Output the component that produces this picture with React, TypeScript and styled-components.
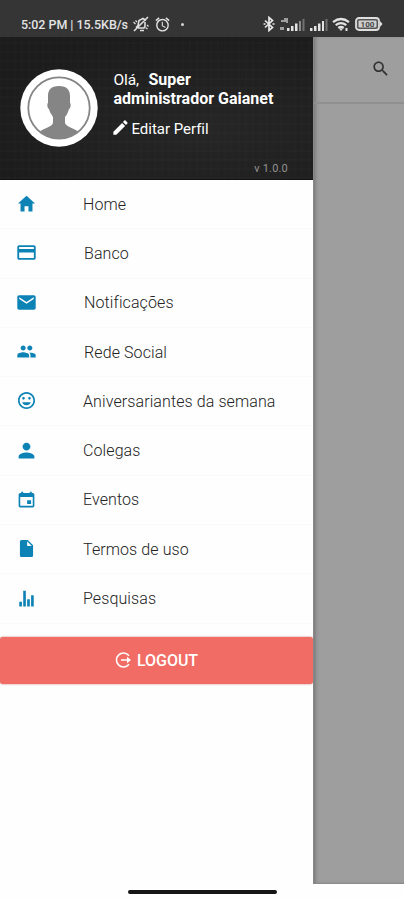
import React from "react";
import styled, { createGlobalStyle } from "styled-components";
import {
  IoMdHome, IoMdCard, IoMdMail, IoMdPeople, IoMdHappy, IoMdPerson,
  IoMdCalendar, IoMdDocument, IoMdStats, IoMdCreate, IoMdSearch,
} from "react-icons/io";
import { MdAlarm } from "react-icons/md";

const GlobalStyle = createGlobalStyle`
  * { box-sizing: border-box; }
  body { margin: 0; background: #fff; font-family: Roboto, "Liberation Sans", sans-serif; }
`;

const Screen = styled.div`
  width: 404px;
  height: 900px;
  display: flex;
  flex-direction: column;
  background: #fefefe;
  overflow: hidden;
`;

const StatusBar = styled.header`
  height: 37px;
  flex: none;
  display: flex;
  justify-content: space-between;
  padding: 11px 21px 0;
  background: #353535;
  color: #e4e4e4;
`;

const StatusGroup = styled.div<{ $gap: number }>`
  height: 26px;
  display: flex;
  align-items: center;
  gap: ${(p) => p.$gap}px;
  svg { display: block; flex: none; }
`;

const Clock = styled.span`
  width: 107px;
  font-size: 12.5px;
  font-weight: 500;
  letter-spacing: -0.05px;
  white-space: nowrap;
`;

const Dot = styled.i`
  width: 3px;
  height: 3px;
  margin-left: 6px;
  border-radius: 50%;
  background: #d5d5d5;
`;

const Body = styled.div`
  height: 847px;
  flex: none;
  display: flex;
`;

const Drawer = styled.aside`
  width: 313px;
  flex: none;
  background: #fefefe;
`;

const Profile = styled.section`
  position: relative;
  height: 143px;
  display: flex;
  padding: 32px 0 0 20px;
  color: #fff;
  background-color: #1d1d1d;
  background-image:
    repeating-linear-gradient(90deg, rgba(255, 255, 255, 0.008) 0 2px, transparent 2px 7px),
    repeating-linear-gradient(0deg, rgba(255, 255, 255, 0.01) 0 2px, transparent 2px 9px),
    radial-gradient(ellipse at 65% 65%, #262626, #1c1c1c 75%);
  border-bottom: 1px solid #111;
`;

const Avatar = styled.svg`
  width: 78px;
  height: 78px;
  flex: none;
`;

const Identity = styled.div`
  margin: 2px 0 0 15.5px;
  font-size: 15px;
  line-height: 18.5px;
`;

const Line = styled.div`
  white-space: pre;
  letter-spacing: -0.1px;
  strong { font-size: 16px; font-weight: 700; letter-spacing: 0; }
`;

const Greeting = styled.span`
  font-size: 15.5px;
  margin-right: 2px;
`;

const EditLink = styled.div`
  display: flex;
  align-items: center;
  gap: 2px;
  margin-top: 12px;
  svg { display: block; margin: -3px 0 0 -3px; }
  ${Line} { letter-spacing: -0.02px; }
`;

const Version = styled.span`
  position: absolute;
  right: 25px;
  bottom: 4px;
  font-size: 11px;
  line-height: 13px;
  letter-spacing: 0.2px;
  color: #929292;
`;

const Menu = styled.nav`
  display: flex;
  flex-direction: column;
`;

const MenuItem = styled.a<{ $indent?: number }>`
  height: 49.3px;
  display: grid;
  grid-template-columns: ${(p) => 67 + (p.$indent ?? 0)}px 1fr;
  align-items: center;
  padding-left: 16px;
  border-bottom: 1px solid #fafafa;
  font-size: 16px;
  font-weight: 300;
  letter-spacing: 0.1px;
  color: #222;
  svg { display: block; margin-top: -1px; color: #0d82b5; }
`;

const Logout = styled.button`
  width: 313px;
  height: 47px;
  margin: 13px 0 0;
  display: flex;
  align-items: center;
  justify-content: center;
  gap: 5px;
  border: 0;
  border-radius: 3px;
  background: #f16c64;
  box-shadow: 0 0 2px rgba(160, 50, 45, 0.7);
  color: #fff;
  font: 500 16px Roboto, sans-serif;
  letter-spacing: -0.05px;
`;

const Page = styled.main`
  flex: 1;
  background: #9e9e9e;
  border-left: 1px solid #888;
  border-bottom: 1px solid #8b8b8b;
  box-shadow: inset 3px 0 4px -2px rgba(0, 0, 0, 0.3);
`;

const Toolbar = styled.div`
  height: 67px;
  display: flex;
  justify-content: flex-end;
  padding: 22px 14px 0;
  border-bottom: 2px solid #909090;
  color: #303030;
`;

const HomeIndicator = styled.div`
  width: 149px;
  height: 4px;
  margin: 6px 0 0 128px;
  border-radius: 2px;
  background: #151515;
`;

const BluetoothIcon = () => (
  <svg width="12" height="16" viewBox="0 0 12 16" fill="none" stroke="#e8e8e8" strokeWidth="1.7">
    <path d="M2 4.5l7.5 7L6 14.5v-13l3.5 3L2 11.5" />
    <path d="M.5 8h2M9.5 8h2" />
  </svg>
);

const MutedBell = () => (
  <svg width="18" height="18" viewBox="0 0 18 18" fill="none" stroke="#dedede" strokeWidth="1.6">
    <path d="M4 12.5l2-2 1-5 4-2 3 2M6 13h6l1-2V7M8 15.5h4M2 16L16 2" />
    <path d="M1.5 7l2 2M3.5 5.5L5 7M15 10l1.5 1.5M13.5 12.5l2 1.5" strokeWidth="1.2" />
  </svg>
);

const Signal = ({ busy }: { busy?: boolean }) => (
  <svg width={busy ? 26 : 19} height="15" viewBox={busy ? "0 0 26 15" : "7 0 19 15"} fill="#e4e4e4">
    {busy && <path d="M2 3h5v2H2zM5 1h4v5H7V3H5zM1 10h4v3H1z" opacity=".6" />}
    <path d="M8 11h2.5v3H8zM12 9h2.5v5H12zM16 6.5h2.5V14H16z" />
    <path d="M20 4h2v10h-2z" opacity={busy ? 0.5 : 1} />
    <path d="M23.5 2h2v12h-2z" opacity=".35" />
  </svg>
);

const Wifi = () => (
  <svg width="19" height="15" viewBox="0 0 19 15" fill="none" stroke="#e2e2e2" strokeWidth="2.2">
    <path d="M1 5.2q8-6.4 16 0M3.7 8.2q5.3-4.2 10.6 0M6.3 11q2.7-2 5.4 0" />
    <path d="M7 11.5h4L9 14z" fill="#e2e2e2" stroke="none" />
    <path d="M14.5 11v3" strokeWidth="2" />
  </svg>
);

const Battery = () => (
  <svg width="28" height="14" viewBox="0 0 28 14">
    <rect x="1" y="1" width="23" height="12" rx="3" fill="#555" stroke="#dedede" strokeWidth="1.8" />
    <path d="M25 4l2.5 3L25 10z" fill="#dedede" />
    <rect x="3.5" y="3.5" width="18" height="7" rx="1" fill="#cfcfcf" />
    <text x="12.5" y="10" textAnchor="middle" fontFamily="Roboto" fontSize="8" fontWeight="700" fill="#444">100</text>
  </svg>
);

const LogoutIcon = () => (
  <svg width="17" height="18" viewBox="0 0 17 18" fill="none" stroke="#fff" strokeWidth="1.6">
    <path d="M14 4.7A7 7 0 1 0 14 13.3M6 9h8" />
    <path d="M12 5.8L16 9l-4 3.2z" fill="#fff" stroke="none" />
  </svg>
);

const items = [
  { label: "Home", Icon: IoMdHome },
  { label: "Banco", Icon: IoMdCard, indent: 1 },
  { label: "Notificações", Icon: IoMdMail, indent: 1 },
  { label: "Rede Social", Icon: IoMdPeople, indent: 1 },
  { label: "Aniversariantes da semana", Icon: IoMdHappy },
  { label: "Colegas", Icon: IoMdPerson },
  { label: "Eventos", Icon: IoMdCalendar },
  { label: "Termos de uso", Icon: IoMdDocument },
  { label: "Pesquisas", Icon: IoMdStats },
];

export default function App() {
  return (
    <>
      <GlobalStyle />
      <Screen>
        <StatusBar>
          <StatusGroup $gap={4}>
            <Clock>5:02 PM | 15.5KB/s</Clock>
            <MutedBell />
            <MdAlarm size={17} />
            <Dot />
          </StatusGroup>
          <StatusGroup $gap={4}>
            <BluetoothIcon />
            <Signal busy />
            <Signal />
            <Wifi />
            <Battery />
          </StatusGroup>
        </StatusBar>
        <Body>
          <Drawer>
            <Profile>
              <Avatar viewBox="0 0 78 78">
                <clipPath id="portrait"><circle cx="39" cy="39" r="30.5" /></clipPath>
                <circle cx="39" cy="39" r="38.7" fill="#fff" />
                <circle cx="39" cy="39" r="30.7" fill="#fff" stroke="#858585" strokeWidth="1.8" />
                <path clipPath="url(#portrait)" fill="#858585" d="M39 17c-8 0-11 4-11 10v7c-1 0-1 5 1 6 1 4 3 6 4 8v6c-1 4-9 5-14 9v9h40v-9c-5-4-13-5-14-9v-6c2-2 3-5 4-8 2-1 2-6 1-6v-7c0-6-3-10-11-10z" />
              </Avatar>
              <Identity>
                <Line><Greeting>Olá,  </Greeting><strong>Super</strong></Line>
                <Line><strong>administrador Gaianet</strong></Line>
                <EditLink><IoMdCreate size={19} /><Line>Editar Perfil</Line></EditLink>
              </Identity>
              <Version>v 1.0.0</Version>
            </Profile>
            <Menu>
              {items.map(({ label, Icon, indent }) => (
                <MenuItem key={label} $indent={indent}>
                  <Icon size={21} />
                  <span>{label}</span>
                </MenuItem>
              ))}
            </Menu>
            <Logout><LogoutIcon />LOGOUT</Logout>
          </Drawer>
          <Page>
            <Toolbar><IoMdSearch size={19} /></Toolbar>
          </Page>
        </Body>
        <HomeIndicator />
      </Screen>
    </>
  );
}
